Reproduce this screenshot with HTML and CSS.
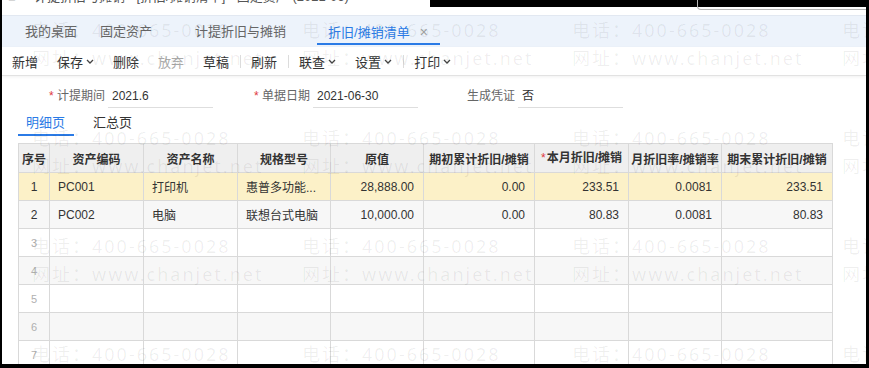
FILE: index.html
```html
<!DOCTYPE html>
<html lang="zh-CN">
<head>
  <meta charset="UTF-8" />
  <title>折旧/摊销清单</title>
  <link rel="stylesheet" href="styles.css">
</head>
<body>
  <div class="window">
    <div class="topbar">
      <div class="title-line"><span>■&nbsp;&nbsp;&nbsp;&nbsp;&nbsp;计提折旧与摊销 - [折旧/摊销清单] - 固定资产 (2021-06)</span></div>
      <div class="top-black"><div class="search-edge"></div></div>
    </div>

    <div class="tabbar">
      <div class="tab">我的桌面</div>
      <div class="tab">固定资产</div>
      <div class="tab">计提折旧与摊销</div>
      <div class="tab active">折旧/摊销清单<span class="close">×</span></div>
    </div>

    <div class="toolbar">
      <span class="tb-item">新增</span>
      <span class="tb-item">保存<svg class="chev" width="8" height="5" viewBox="0 0 8 5"><path d="M1 1l3 3 3-3" /></svg></span>
      <span class="tb-item">删除</span>
      <span class="tb-item disabled">放弃</span>
      <span class="tb-item">草稿</span>
      <span class="tb-sep"></span>
      <span class="tb-item">刷新</span>
      <span class="tb-sep"></span>
      <span class="tb-item">联查<svg class="chev" width="8" height="5" viewBox="0 0 8 5"><path d="M1 1l3 3 3-3" /></svg></span>
      <span class="tb-item">设置<svg class="chev" width="8" height="5" viewBox="0 0 8 5"><path d="M1 1l3 3 3-3" /></svg></span>
      <span class="tb-sep"></span>
      <span class="tb-item">打印<svg class="chev" width="8" height="5" viewBox="0 0 8 5"><path d="M1 1l3 3 3-3" /></svg></span>
    </div>

    <div class="content">
      <div class="form-row">
        <div class="field"><span class="req">*</span><span class="label">计提期间</span><span class="value">2021.6</span></div>
        <div class="field"><span class="req">*</span><span class="label">单据日期</span><span class="value">2021-06-30</span></div>
        <div class="field"><span class="req hidden">*</span><span class="label">生成凭证</span><span class="value">否</span></div>
      </div>

      <div class="subtabs">
        <div class="subtab active">明细页</div>
        <div class="subtab">汇总页</div>
      </div>

      <table class="grid">
        <colgroup>
          <col class="c-idx"><col class="c-m"><col class="c-m"><col class="c-s"><col class="c-s">
          <col class="c-l"><col class="c-m"><col class="c-s"><col class="c-l">
        </colgroup>
        <thead>
          <tr>
            <th>序号</th><th>资产编码</th><th>资产名称</th><th>规格型号</th><th>原值</th>
            <th>期初累计折旧/摊销</th><th><span class="req">*</span>本月折旧/摊销</th><th>月折旧率/摊销率</th><th>期末累计折旧/摊销</th>
          </tr>
        </thead>
        <tbody>
          <tr class="selected">
            <td class="idx">1</td><td>PC001</td><td>打印机</td><td>惠普多功能...</td><td class="num">28,888.00</td>
            <td class="num">0.00</td><td class="num">233.51</td><td class="num">0.0081</td><td class="num">233.51</td>
          </tr>
          <tr>
            <td class="idx">2</td><td>PC002</td><td>电脑</td><td>联想台式电脑</td><td class="num">10,000.00</td>
            <td class="num">0.00</td><td class="num">80.83</td><td class="num">0.0081</td><td class="num">80.83</td>
          </tr>
          <tr class="empty"><td class="idx">3</td><td></td><td></td><td></td><td></td><td></td><td></td><td></td><td></td></tr>
          <tr class="empty"><td class="idx">4</td><td></td><td></td><td></td><td></td><td></td><td></td><td></td><td></td></tr>
          <tr class="empty"><td class="idx">5</td><td></td><td></td><td></td><td></td><td></td><td></td><td></td><td></td></tr>
          <tr class="empty"><td class="idx">6</td><td></td><td></td><td></td><td></td><td></td><td></td><td></td><td></td></tr>
          <tr class="empty"><td class="idx">7</td><td></td><td></td><td></td><td></td><td></td><td></td><td></td><td></td></tr>
          <tr class="empty"><td class="idx">8</td><td></td><td></td><td></td><td></td><td></td><td></td><td></td><td></td></tr>
        </tbody>
      </table>
    </div>

    <!-- 水印 -->
    <div class="watermark">
      <div class="wm-block">
        <div class="wm-row"><span>电话：400-665-0028</span><span>电话：400-665-0028</span><span>电话：400-665-0028</span><span>电话：400-665-0028</span></div>
        <div class="wm-row"><span>网址：www.chanjet.net</span><span>网址：www.chanjet.net</span><span>网址：www.chanjet.net</span><span>网址：www.chanjet.net</span></div>
      </div>
      <div class="wm-block">
        <div class="wm-row"><span>电话：400-665-0028</span><span>电话：400-665-0028</span><span>电话：400-665-0028</span><span>电话：400-665-0028</span></div>
        <div class="wm-row"><span>网址：www.chanjet.net</span><span>网址：www.chanjet.net</span><span>网址：www.chanjet.net</span><span>网址：www.chanjet.net</span></div>
      </div>
      <div class="wm-block">
        <div class="wm-row"><span>电话：400-665-0028</span><span>电话：400-665-0028</span><span>电话：400-665-0028</span><span>电话：400-665-0028</span></div>
        <div class="wm-row"><span>网址：www.chanjet.net</span><span>网址：www.chanjet.net</span><span>网址：www.chanjet.net</span><span>网址：www.chanjet.net</span></div>
      </div>
      <div class="wm-block">
        <div class="wm-row"><span>电话：400-665-0028</span><span>电话：400-665-0028</span><span>电话：400-665-0028</span><span>电话：400-665-0028</span></div>
      </div>
    </div>
  </div>
</body>
</html>
```

FILE: styles.css
```css
* { box-sizing: border-box; }
body {
  margin: 0;
  background: #000;
  font-family: "Liberation Sans", "Noto Sans CJK SC", sans-serif;
  color: #333;
}
.window {
  position: relative;
  margin-left: 2px;
  width: 864px;
  height: 364px;
  background: #fff;
  overflow: hidden;
}

/* title bar, cut off at the top */
.topbar { display: flex; height: 15px; }
.title-line {
  width: 428px;
  overflow: hidden;
  white-space: nowrap;
  font-size: 13px;
  color: #555;
}
.title-line span { display: block; margin-top: -11px; line-height: 16px; padding-left: 6px; }
.top-black { flex: 1; height: 7px; background: #000; position: relative; }
.search-edge {
  position: absolute;
  left: 267px;
  right: -4px;
  top: 0;
  height: 10px;
  border: 1px solid #b5b5b5;
  border-top: none;
  border-radius: 0 0 0 4px;
}

/* main tabs */
.tabbar {
  display: flex;
  height: 32px;
  padding: 5px 0 0 23px;
  background: #edf3fb;
  border-top: 1px solid #e2e8f1;
  font-size: 13px;
  color: #666;
}
.tab { height: 24px; line-height: 22px; border-bottom: 2px solid transparent; white-space: nowrap; }
.tab:nth-child(1) { margin-right: 23px; }
.tab:nth-child(2) { margin-right: 43px; }
.tab:nth-child(3) { margin-right: 31px; }
.tab.active { color: #2b7be6; border-bottom-color: #2b7be6; padding: 0 12px 0 11px; }
.close { color: #a0a0a0; font-size: 14px; margin-left: 10px; }

/* toolbar */
.toolbar {
  display: flex;
  align-items: center;
  height: 29px;
  padding-left: 10px;
  border-bottom: 1px solid #e2e2e2;
  box-shadow: 0 1px 3px rgba(0, 0, 0, 0.06);
  font-size: 13px;
  color: #333;
}
.tb-item { margin-right: 19px; white-space: nowrap; display: flex; align-items: center; }
.tb-item.disabled { color: #aaa; }
.tb-sep { width: 1px; height: 13px; background: #dcdcdc; margin: 0 10px 0 -8px; }
.chev { margin-left: 3px; fill: none; stroke: #444; stroke-width: 1.3; }

.content { padding-left: 16px; }

/* document header fields */
.form-row { display: flex; padding: 10px 0 0 31px; height: 32px; font-size: 12px; }
.field { display: flex; width: 205px; height: 22px; }
.req { color: #e0393e; width: 8px; line-height: 20px; }
.req.hidden { visibility: hidden; }
.label { color: #666; line-height: 21px; }
.value {
  width: 105px;
  margin-left: 3px;
  padding-left: 4px;
  line-height: 21px;
  border-bottom: 1px solid #dedede;
  color: #333;
}

.subtabs { display: flex; margin-top: 4px; font-size: 13px; }
.subtab { height: 24px; line-height: 22px; padding: 0 9px 0 8px; border-bottom: 2px solid transparent; margin-right: 11px; }
.subtab.active { color: #2b7be6; border-bottom-color: #2b7be6; }

/* grid */
.grid {
  margin-top: 7px;
  width: 814px;
  table-layout: fixed;
  border-collapse: collapse;
  font-size: 12px;
}
.c-idx { width: 31px; }
.c-s { width: 93px; }
.c-m { width: 94px; }
.c-l { width: 111px; }
.grid th, .grid td {
  border: 1px solid #d9d9d9;
  padding: 0 8px;
  white-space: nowrap;
  overflow: hidden;
}
.grid th { height: 29px; background: #efefef; font-weight: bold; color: #333; text-align: center; padding: 0 2px; }
.grid th .req { width: auto; margin-right: 1px; font-weight: normal; }
.grid td { height: 28px; }
.grid td.idx { text-align: center; padding: 0; }
.grid td.num { text-align: right; padding-right: 9px; }
.grid tbody tr:nth-child(even) td { background: #f7f7f7; }
.grid tr.selected td { background: #fcf1c8; }
.grid tr.empty td.idx { color: #b0b0b0; font-size: 11px; }

/* watermark */
.watermark {
  position: absolute;
  top: 0;
  left: 0;
  right: 0;
  bottom: 0;
  padding-top: 20px;
  pointer-events: none;
  font-family: "Noto Sans", "Noto Sans CJK SC", sans-serif;
  font-size: 18px;
  color: rgba(0, 0, 0, 0.065);
}
.wm-block { height: 108px; }
.wm-row { display: flex; padding-left: 30px; line-height: 20px; white-space: nowrap; }
.wm-row + .wm-row { margin-top: 8px; }
.wm-row span { width: 270px; flex-shrink: 0; letter-spacing: 2px; }
```
